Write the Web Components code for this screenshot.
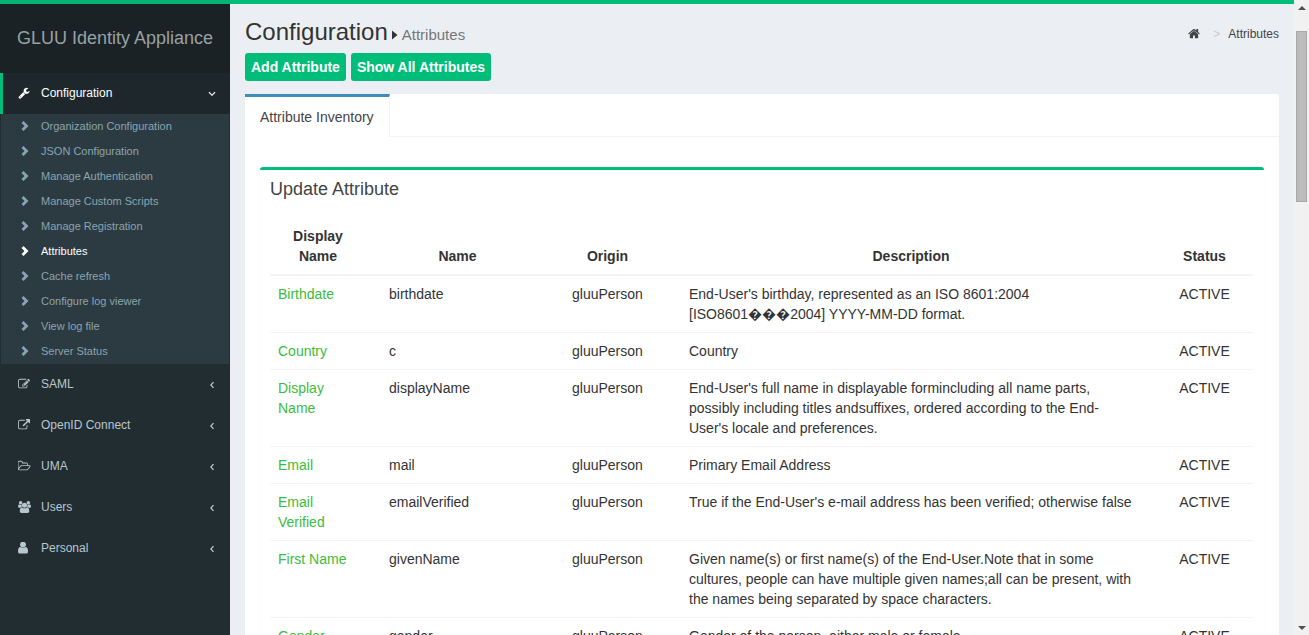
<!DOCTYPE html>
<html lang="en">
<head>
<meta charset="utf-8">
<title>GLUU Identity Appliance</title>
<style>
  html, body { margin: 0; height: 100%; overflow: hidden; }
  body { font-family: "Liberation Sans", Arial, sans-serif; font-size: 14px; line-height: 20px; color: #333; background: #ebeff4; }
</style>
</head>
<body>
<gluu-shell>
  <side-bar slot="side" heading="GLUU Identity Appliance">
    <nav-group icon="wrench" label="Configuration" open>
      <nav-leaf>Organization Configuration</nav-leaf>
      <nav-leaf>JSON Configuration</nav-leaf>
      <nav-leaf>Manage Authentication</nav-leaf>
      <nav-leaf>Manage Custom Scripts</nav-leaf>
      <nav-leaf>Manage Registration</nav-leaf>
      <nav-leaf active>Attributes</nav-leaf>
      <nav-leaf>Cache refresh</nav-leaf>
      <nav-leaf>Configure log viewer</nav-leaf>
      <nav-leaf>View log file</nav-leaf>
      <nav-leaf>Server Status</nav-leaf>
    </nav-group>
    <nav-group icon="edit" label="SAML"></nav-group>
    <nav-group icon="external" label="OpenID Connect"></nav-group>
    <nav-group icon="folder" label="UMA"></nav-group>
    <nav-group icon="users" label="Users"></nav-group>
    <nav-group icon="user" label="Personal"></nav-group>
  </side-bar>
  <page-header heading="Configuration" sub="Attributes">
    <action-button>Add Attribute</action-button>
    <action-button>Show All Attributes</action-button>
  </page-header>
  <tab-card label="Attribute Inventory">
    <title-box heading="Update Attribute">
      <attribute-table></attribute-table>
    </title-box>
  </tab-card>
  <scroll-rail slot="rail"></scroll-rail>
</gluu-shell>

<script>
const define = (name, render) => customElements.define(name, class extends HTMLElement {
  connectedCallback() {
    if (this.shadowRoot) return;
    const t = document.createElement('template');
    t.innerHTML = render(this);
    this.attachShadow({ mode: 'open' }).append(t.content.cloneNode(true));
  }
});

const ICONS = {
  wrench: [12, 12, '0 0 1792 1792', 'M448 1472q0-26-19-45t-45-19-45 19-19 45 19 45 45 19 45-19 19-45zm644-420l-682 682q-37 37-90 37-52 0-91-37l-106-108q-38-36-38-90 0-53 38-91l681-681q39 98 114.500 173.500t173.500 114.500zm634-435q0 39-23 106-47 134-164.500 217.500t-258.500 83.500q-185 0-316.500-131.500t-131.500-316.500 131.500-316.500 316.500-131.500q58 0 121.500 16.500t107.500 46.500q16 11 16 28t-16 28l-293 169v224l193 107q5-3 79-48.500t135.500-81 70.500-35.500q15 0 23.500 10t8.500 25z'],
  home: [12, 12, '64 128 1664 1664', 'M1472 992v480q0 26-19 45t-45 19h-384v-384h-256v384h-384q-26 0-45-19t-19-45v-480q0-1 .5-3t.5-3l575-474 575 474q1 2 1 6zm223-69l-62 74q-8 9-21 11h-3q-13 0-21-7l-692-577-692 577q-12 8-24 7-13-2-21-11l-62-74q-8-10-7-23.500t11-21.500l719-599q32-26 76-26t76 26l244 204v-195q0-14 9-23t23-9h192q14 0 23 9t9 23v408l219 182q10 8 11 21.500t-7 23.500z'],
  edit: [12, 12, '0 0 1792 1792', 'M888 1184l116-116-152-152-116 116v56h96v96h56zm440-720q-16-16-33 1l-350 350q-17 17-1 33t33-1l350-350q17-17 1-33zm80 594v190q0 119-84.500 203.500t-203.500 84.500h-832q-119 0-203.500-84.500t-84.500-203.500v-832q0-119 84.500-203.500t203.500-84.500h832q63 0 117 25 15 7 18 23 3 17-9 29l-49 49q-14 14-32 8-23-6-45-6h-832q-66 0-113 47t-47 113v832q0 66 47 113t113 47h832q66 0 113-47t47-113v-126q0-13 9-22l64-64q15-15 35-7t20 29zm-96-738l288 288-672 672h-288v-288zm444 132l-92 92-288-288 92-92q28-28 68-28t68 28l152 152q28 28 28 68t-28 68z'],
  external: [12, 12, '0 0 1792 1792', 'M1408 928v320q0 119-84.500 203.500t-203.500 84.500h-832q-119 0-203.500-84.500t-84.500-203.500v-832q0-119 84.500-203.500t203.500-84.500h704q14 0 23 9t9 23v64q0 14-9 23t-23 9h-704q-66 0-113 47t-47 113v832q0 66 47 113t113 47h832q66 0 113-47t47-113v-320q0-14 9-23t23-9h64q14 0 23 9t9 23zm384-864v512q0 26-19 45t-45 19-45-19l-176-176-652 652q-10 10-23 10t-23-10l-114-114q-10-10-10-23t10-23l652-652-176-176q-19-19-19-45t19-45 45-19h512q26 0 45 19t19 45z'],
  folder: [13, 12, '0 0 1920 1792', 'M1717 931q0-35-53-35h-1088q-40 0-85.500 21.500t-71.500 52.500l-294 363q-18 24-18 40 0 35 53 35h1088q40 0 86-22t71-53l294-363q18-22 18-39zm-1141-163h768v-160q0-40-28-68t-68-28h-576q-40 0-68-28t-28-68v-64q0-40-28-68t-68-28h-320q-40 0-68 28t-28 68v853l256-315q44-53 116-87.500t140-34.500zm1269 163q0 62-46 120l-295 363q-43 53-116 87.500t-140 34.500h-1088q-92 0-158-66t-66-158v-960q0-92 66-158t158-66h320q92 0 158 66t66 158v32h544q92 0 158 66t66 158v160h192q54 0 99 24.500t67 70.500q15 32 15 68z'],
  users: [13, 12, '0 0 1920 1792', 'M593 896q-162 5-265 128h-134q-82 0-138-40.500t-56-118.500q0-353 124-353 6 0 43.500 21t97.500 42.500 119 21.500q67 0 133-23-5 37-5 66 0 139 81 256zm1071 637q0 120-73 189.500t-194 69.500h-874q-121 0-194-69.500t-73-189.500q0-53 3.500-103.500t14-109 26.500-108.500 43-97.500 62-81 85.500-53.500 111.500-20q10 0 43 21.500t73 48 107 48 135 21.500 135-21.500 107-48 73-48 43-21.500q61 0 111.500 20t85.500 53.500 62 81 43 97.500 26.500 108.500 14 109 3.500 103.500zm-1024-1277q0 106-75 181t-181 75-181-75-75-181 75-181 181-75 181 75 75 181zm704 384q0 159-112.500 271.500t-271.500 112.500-271.500-112.500-112.500-271.500 112.500-271.500 271.500-112.500 271.500 112.500 112.500 271.500zm576 225q0 78-56 118.500t-138 40.500h-134q-103-123-265-128 81-117 81-256 0-29-5-66 66 23 133 23 59 0 119-21.500t97.500-42.500 43.500-21q124 0 124 353zm-128-609q0 106-75 181t-181 75-181-75-75-181 75-181 181-75 181 75 75 181z'],
  user: [12, 12, '256 180 1536 1536', 'M1536 1399q0 109-62.500 187t-150.500 78h-854q-88 0-150.500-78t-62.500-187q0-85 8.500-160.500t31.500-152 58.500-131 94-89 134.500-34.500q131 128 313 128t313-128q76 0 134.500 34.500t94 89 58.500 131 31.500 152 8.500 160.500zm-256-887q0 159-112.500 271.500t-271.500 112.500-271.500-112.500-112.500-271.500 112.500-271.500 271.500-112.500 271.500 112.500 112.500 271.500z'],
  chevron: [8, 12, '0 0 8 12', 'M.5 3 2.500 1 7.500 6 2.500 11 .5 9 3.500 6z'],
  left: [6, 8, '0 0 6 8', 'M4 .7 5 1.500 2.700 4 5 6.500 4 7.300 1 4z'],
  down: [8, 6, '0 0 8 6', 'M.5 1.600 1.300.7 4 3.400 6.700.7 7.500 1.600 4 5.100z'],
  caret: [6, 10, '0 0 6 10', 'M0 .5 5.500 5 0 9.500z'],
  up: [8, 4, '0 0 8 4', 'M0 4 4 0 8 4z'],
  drop: [8, 4, '0 0 8 4', 'M0 0 4 4 8 0z']
};

define('ui-icon', el => {
  const [w, h, box, d] = ICONS[el.getAttribute('name')];
  return `<style>:host{display:block;flex:none}svg{display:block;fill:currentColor}</style>
    <svg width="${w}" height="${h}" viewBox="${box}" aria-hidden="true"><path d="${d}"/></svg>`;
});

define('gluu-shell', () => `<style>
  :host{display:flex;height:100vh;overflow:hidden}
  .app{flex:1;min-width:0;display:flex;flex-direction:column}
  .bar{flex:none;height:4px;background:linear-gradient(to right,#05b375 230px,#00be79 230px)}
  .body{flex:1;min-height:0;display:flex}
  main{flex:1;min-width:0;padding:15px;overflow:hidden;background:#ebeff4}
</style>
<div class="app"><div class="bar"></div><div class="body"><slot name="side"></slot><main><slot></slot></main></div></div>
<slot name="rail"></slot>`);

define('side-bar', el => `<style>
  :host{display:block;flex:none;width:230px;background:#222d32;overflow:hidden}
  .logo{display:block;padding:24px 0 25px;text-align:center;font-size:18px;color:#98a1a4;background:#1a2226;text-decoration:none}
</style>
<a class="logo" href="#">${el.getAttribute('heading')}</a><nav><slot></slot></nav>`);

define('nav-group', el => {
  const open = el.hasAttribute('open');
  return `<style>
  :host{display:block;font-size:12px}
  a{display:flex;align-items:center;height:41px;box-sizing:border-box;padding:0 13px 0 15px;border-left:3px solid transparent;color:#b8c7ce;text-decoration:none}
  :host([open]) a{color:#fff;background:#1e282c;border-left-color:#00be79}
  .ico{width:23px;padding-bottom:2px}
  .text{flex:1;padding-bottom:1px}
  .arrow{width:10px;display:flex;justify-content:center;padding-top:1px}
  .sub{margin:0 1px;background:#2c3b41}
</style>
<a href="#"><span class="ico"><ui-icon name="${el.getAttribute('icon')}"></ui-icon></span><span class="text">${el.getAttribute('label')}</span><span class="arrow"><ui-icon name="${open ? 'down' : 'left'}"></ui-icon></span></a>
<div class="sub"><slot></slot></div>`;
});

define('nav-leaf', () => `<style>
  :host{display:block}
  a{display:flex;align-items:center;gap:12px;height:25px;box-sizing:border-box;padding:0 0 2px 20px;font-size:11px;color:#8aa4af;text-decoration:none}
  :host([active]) a{color:#fff}
</style>
<a href="#"><ui-icon name="chevron"></ui-icon><span><slot></slot></span></a>`);

define('page-header', el => `<style>
  :host{display:block;padding-bottom:13px}
  .top{display:flex;justify-content:space-between;align-items:center;height:26px;margin-bottom:8px}
  h1{margin:0;font-size:24px;line-height:26px;font-weight:400;display:flex;align-items:baseline;gap:4px}
  small{font-size:15px;line-height:16px;color:#777}
  ol{list-style:none;margin:0;padding:4px 0 0;display:flex;align-items:center;font-size:12px}
  a{color:#444;text-decoration:none}
  .sep{color:#ccc;padding:0 8px 0 13px}
  .actions{display:flex;gap:5px}
</style>
<div class="top">
  <h1><span>${el.getAttribute('heading')}</span><ui-icon name="caret"></ui-icon><small>${el.getAttribute('sub')}</small></h1>
  <ol><li><a href="#" aria-label="Home"><ui-icon name="home"></ui-icon></a></li><li class="sep">&gt;</li><li><a href="#">${el.getAttribute('sub')}</a></li></ol>
</div>
<div class="actions"><slot></slot></div>`);

define('action-button', () => `<style>
  :host{display:block}
  button{display:block;height:28px;padding:0 6px;border:0;border-radius:3px;background:#00be79;color:#fff;font:bold 14px/20px "Liberation Sans",Arial,sans-serif}
</style><button type="button"><slot></slot></button>`);

define('tab-card', el => `<style>
  :host{display:block;background:#fff;border-radius:3px;box-shadow:0 1px 1px rgba(0,0,0,.1)}
  .tabs{display:flex}
  a{border-top:3px solid #3c8dbc;border-right:1px solid #f4f4f4;padding:10px 15px;color:#444;text-decoration:none}
  .rest{flex:1;border-bottom:1px solid #f4f4f4}
  .pane{padding:30px 15px}
</style>
<div class="tabs"><a href="#">${el.getAttribute('label')}</a><div class="rest"></div></div>
<div class="pane"><slot></slot></div>`);

define('title-box', el => `<style>
  :host{display:block;border-top:3px solid #00be79;border-radius:3px;background:#fff;box-shadow:0 1px 1px rgba(0,0,0,.1)}
  h3{margin:0;padding:10px;font-size:18px;line-height:18px;font-weight:400;color:#444}
  .body{padding:10px 11px 10px 10px}
</style>
<h3>${el.getAttribute('heading')}</h3><div class="body"><slot></slot></div>`);

const ROWS = [
  ['Birthdate', 'birthdate', "End-User's birthday, represented as an ISO 8601:2004 [ISO8601\uFFFD\uFFFD\uFFFD2004] YYYY-MM-DD format."],
  ['Country', 'c', 'Country'],
  ['Display Name', 'displayName', "End-User's full name in displayable formincluding all name parts, possibly including titles andsuffixes, ordered according to the End-User's locale and preferences."],
  ['Email', 'mail', 'Primary Email Address'],
  ['Email Verified', 'emailVerified', "True if the End-User's e-mail address has been verified; otherwise false"],
  ['First Name', 'givenName', 'Given name(s) or first name(s) of the End-User.Note that in some cultures, people can have multiple given names;all can be present, with the names being separated by space characters.'],
  ['Gender', 'gender', 'Gender of the person, either male or female.']
];

define('attribute-table', () => `<style>
  :host{display:block}
  table{width:100%;table-layout:fixed;border-collapse:separate;border-spacing:0}
  th,td{padding:8px 23px;vertical-align:top;text-align:left}
  th:first-child,td:first-child{padding:8px}
  th{vertical-align:bottom;text-align:center;border-bottom:2px solid #f4f4f4}
  td:last-child,th:last-child{padding:8px 0;text-align:center}
  tr+tr td{border-top:1px solid #f4f4f4}
  a{color:#3cbc3c;text-decoration:none}
  .c1{width:96px}.c2{width:183px}.c3{width:117px}.c5{width:97px}
</style>
<table><colgroup><col class="c1"><col class="c2"><col class="c3"><col><col class="c5"></colgroup>
<thead><tr><th>Display Name</th><th>Name</th><th>Origin</th><th>Description</th><th>Status</th></tr></thead>
<tbody>${ROWS.map(([d, n, t]) => `<tr><td><a href="#">${d}</a></td><td>${n}</td><td>gluuPerson</td><td>${t}</td><td>ACTIVE</td></tr>`).join('')}</tbody></table>`);

define('scroll-rail', () => `<style>
  :host{flex:none;width:15px;display:flex;flex-direction:column;align-items:center;background:#f1f1f1;color:#505050}
  .up{padding:6px 0 21px}
  .thumb{box-sizing:border-box;width:11px;height:27%;background:#bcbcbc;border:1px solid #a8a8a8}
  .down{margin-top:auto;padding-bottom:5px}
</style>
<ui-icon class="up" name="up"></ui-icon><div class="thumb"></div><ui-icon class="down" name="drop"></ui-icon>`);
</script>
</body>
</html>
